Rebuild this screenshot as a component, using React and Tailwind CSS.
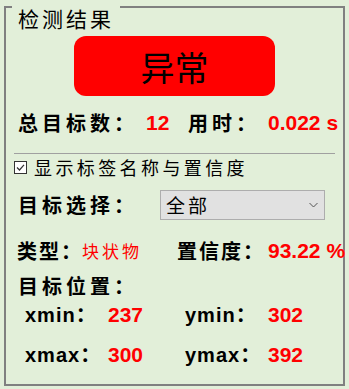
import React from 'react'

const cjk = { fontFamily: '"Noto Sans CJK SC", sans-serif' }
const num = { fontFamily: '"Liberation Sans", "Noto Sans CJK SC", sans-serif' }

const App = () => {
  return (
    <div className="w-[349px] h-[389px] bg-[#e2efd9] pt-[6px] pl-[4px] overflow-hidden" style={cjk}>
      <div className="relative w-[341px] h-[380px] border-2 border-[#808080]">
        {/* Group title */}
        <div className="absolute left-[6px] top-[-3px] w-[108px] h-[26px] pl-[6px] bg-[#e2efd9] text-[21px] leading-[26px] tracking-[3px] text-black whitespace-nowrap">
          检测结果
        </div>

        {/* Status badge */}
        <div className="ml-[68px] mt-[28px] w-[201px] h-[60px] rounded-[12px] bg-[#ff0000] flex items-center justify-center text-[34px] text-black">
          异常
        </div>

        {/* Count + time */}
        <div className="mt-[12px] h-[30px] flex items-center text-black">
          <span className="ml-[12px] w-[128px] shrink-0 text-[20px] font-bold tracking-[4px] whitespace-nowrap">总目标数：</span>
          <span className="w-[42px] shrink-0 text-[21px] font-bold text-[#ff0000]" style={num}>12</span>
          <span className="w-[80px] shrink-0 text-[20px] font-bold tracking-[4px] whitespace-nowrap">用时：</span>
          <span className="text-[21px] font-bold text-[#ff0000] whitespace-nowrap" style={num}>0.022 s</span>
        </div>

        <div className="ml-[8px] mt-[15px] w-[321px] h-px bg-[#a0a0a0]" />

        {/* Checkbox */}
        <div className="mt-[2px] h-[22px] flex items-center">
          <svg className="ml-[8px] w-[13px] h-[13px]" viewBox="0 0 13 13">
            <rect x="0.5" y="0.5" width="12" height="12" fill="#fff" stroke="#333" />
            <path d="M3 6.5 L5.5 9 L10 3.8" fill="none" stroke="#333" strokeWidth="1.2" />
          </svg>
          <span className="ml-[7px] text-[18px] tracking-[3.4px] text-black whitespace-nowrap">显示标签名称与置信度</span>
        </div>

        {/* Target select */}
        <div className="mt-[12px] h-[30px] flex items-center">
          <span className="ml-[12px] w-[142px] shrink-0 text-[20px] font-bold tracking-[4px] text-black whitespace-nowrap">目标选择：</span>
          <div className="w-[165px] h-[30px] bg-[#e1e1e1] border border-[#adadad] flex items-center justify-between pl-[5px] pr-[6px]">
            <span className="text-[19px] tracking-[3px] text-black">全部</span>
            <svg className="w-[9px] h-[6px]" viewBox="0 0 9 6">
              <path d="M0.5 1 L4.5 5 L8.5 1" fill="none" stroke="#555" strokeWidth="1" />
            </svg>
          </div>
        </div>

        {/* Type + confidence */}
        <div className="mt-[18px] h-[26px] flex items-center">
          <span className="ml-[11px] w-[65px] min-w-0 shrink-0 text-[20px] font-bold tracking-[2px] text-black whitespace-nowrap">类型：</span>
          <span className="w-[95px] shrink-0 text-[17px] tracking-[3px] text-[#ff0000] whitespace-nowrap">块状物</span>
          <span className="w-[91px] shrink-0 text-[20px] font-bold tracking-[2px] text-black whitespace-nowrap">置信度：</span>
          <span className="text-[21px] font-bold text-[#ff0000] whitespace-nowrap" style={num}>93.22 %</span>
        </div>

        <div className="mt-[10px] h-[24px] flex items-center">
          <span className="ml-[12px] text-[20px] font-bold tracking-[4px] text-black whitespace-nowrap">目标位置：</span>
        </div>

        {/* Coordinates */}
        {[
          ['xmin', '237', 'ymin', '302', 'mt-[4px]'],
          ['xmax', '300', 'ymax', '392', 'mt-[14px]'],
        ].map(([a, av, b, bv, mt]) => (
          <div key={a} className={`${mt} h-[26px] flex items-center font-bold`} style={num}>
            <span className="ml-[19px] w-[83px] shrink-0 text-[20px] tracking-[1px] text-black whitespace-nowrap">{a}：</span>
            <span className="w-[77px] shrink-0 text-[21px] text-[#ff0000]">{av}</span>
            <span className="w-[83px] shrink-0 text-[20px] tracking-[1px] text-black whitespace-nowrap">{b}：</span>
            <span className="text-[21px] text-[#ff0000]">{bv}</span>
          </div>
        ))}
      </div>
    </div>
  )
}

export default App
